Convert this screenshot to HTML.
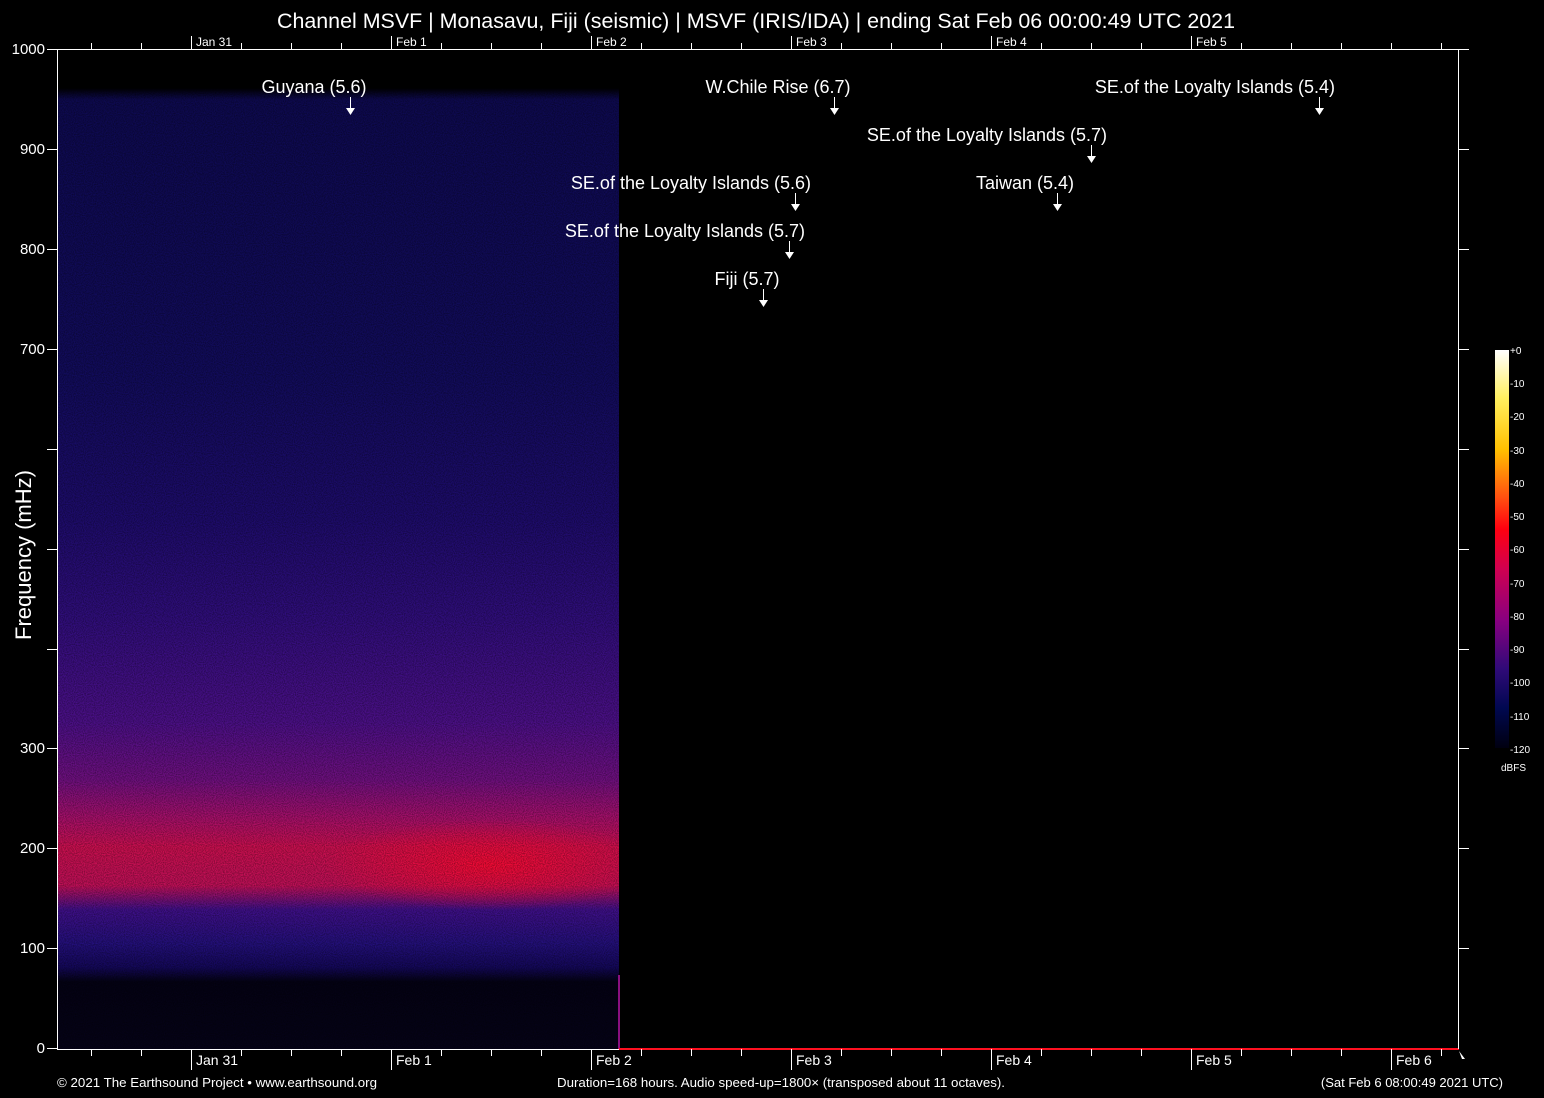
<!DOCTYPE html>
<html><head><meta charset="utf-8"><style>
html,body{margin:0;padding:0;background:#000;width:1544px;height:1098px;overflow:hidden}
svg{display:block}
text{font-family:"Liberation Sans",Arial,sans-serif;fill:#fff}
</style></head><body>
<svg width="1544" height="1098" viewBox="0 0 1544 1098" xmlns="http://www.w3.org/2000/svg">
<defs>
<linearGradient id="sv" x1="0" y1="0" x2="0" y2="1">
<stop offset="0" stop-color="#000000"/>
<stop offset="0.012" stop-color="#0e0a50"/>
<stop offset="0.3" stop-color="#120c5c"/>
<stop offset="0.45" stop-color="#1e0c6c"/>
<stop offset="0.55" stop-color="#300e7c"/>
<stop offset="0.66" stop-color="#4c1088"/>
<stop offset="0.72" stop-color="#701080"/>
<stop offset="0.76" stop-color="#a8106a"/>
<stop offset="0.79" stop-color="#cc1050"/>
<stop offset="0.83" stop-color="#c01058"/>
<stop offset="0.855" stop-color="#40108a"/>
<stop offset="0.89" stop-color="#24107c"/>
<stop offset="0.915" stop-color="#14085a"/>
<stop offset="0.93" stop-color="#040214"/>
<stop offset="1" stop-color="#060318"/>
</linearGradient>
<radialGradient id="blob" cx="490" cy="865" r="130" gradientUnits="userSpaceOnUse" gradientTransform="translate(490 865) scale(1.3 0.35) translate(-490 -865)">
<stop offset="0" stop-color="#ff0a30" stop-opacity="0.85"/>
<stop offset="1" stop-color="#ff0a30" stop-opacity="0"/>
</radialGradient>
<linearGradient id="cb" x1="0" y1="0" x2="0" y2="1">
<stop offset="0" stop-color="#ffffff"/>
<stop offset="0.12" stop-color="#fff060"/>
<stop offset="0.25" stop-color="#ffc000"/>
<stop offset="0.37" stop-color="#ff5010"/>
<stop offset="0.45" stop-color="#ff0010"/>
<stop offset="0.55" stop-color="#d00050"/>
<stop offset="0.68" stop-color="#880080"/>
<stop offset="0.8" stop-color="#300a78"/>
<stop offset="0.9" stop-color="#000850"/>
<stop offset="1" stop-color="#000010"/>
</linearGradient>
<filter id="noise"><feTurbulence type="fractalNoise" baseFrequency="0.9" numOctaves="1" seed="3"/><feColorMatrix values="0 0 0 0 0  0 0 0 0 0  0 0 0 0 0  0 0 0 -1.6 1.1"/></filter>
</defs>
<rect x="57" y="88" width="562" height="961" fill="url(#sv)"/>
<rect x="57" y="88" width="562" height="961" fill="url(#blob)"/>
<rect x="57" y="88" width="562" height="961" filter="url(#noise)" opacity="0.5"/>
<line x1="619" y1="975" x2="619" y2="1049" stroke="#8a1080" stroke-width="2"/>
<line x1="619" y1="1049" x2="1459" y2="1049" stroke="#ff1020" stroke-width="2"/>
<g stroke="#fff" stroke-width="1">
<line x1="57.5" y1="49" x2="57.5" y2="1049"/>
<line x1="1458.5" y1="49" x2="1458.5" y2="1049"/>
<line x1="57" y1="49.5" x2="1469" y2="49.5"/>
<line x1="57" y1="1049.5" x2="619" y2="1049.5"/>
<path d="M47 49.5H57M47 149.5H57M47 249.5H57M47 349.5H57M47 449.5H57M47 549.5H57M47 649.5H57M47 748.5H57M47 848.5H57M47 948.5H57M47 1048.5H57"/>
<path d="M1459 149.5H1469M1459 249.5H1469M1459 349.5H1469M1459 449.5H1469M1459 549.5H1469M1459 649.5H1469M1459 748.5H1469M1459 848.5H1469M1459 948.5H1469"/>
<path d="M91.5 1049V1056M141.5 1049V1056M191.5 1049V1070M241.5 1049V1056M291.5 1049V1056M341.5 1049V1056M391.5 1049V1070M441.5 1049V1056M491.5 1049V1056M541.5 1049V1056M591.5 1049V1070M641.5 1049V1056M691.5 1049V1056M741.5 1049V1056M791.5 1049V1070M841.5 1049V1056M891.5 1049V1056M941.5 1049V1056M991.5 1049V1070M1041.5 1049V1056M1091.5 1049V1056M1141.5 1049V1056M1191.5 1049V1070M1241.5 1049V1056M1291.5 1049V1056M1341.5 1049V1056M1391.5 1049V1070M1441.5 1049V1056"/>
<path d="M91.5 49V43M141.5 49V43M191.5 49V36M241.5 49V43M291.5 49V43M341.5 49V43M391.5 49V36M441.5 49V43M491.5 49V43M541.5 49V43M591.5 49V36M641.5 49V43M691.5 49V43M741.5 49V43M791.5 49V36M841.5 49V43M891.5 49V43M941.5 49V43M991.5 49V36M1041.5 49V43M1091.5 49V43M1141.5 49V43M1191.5 49V36M1241.5 49V43M1291.5 49V43M1341.5 49V43M1391.5 49V43M1441.5 49V43"/>
</g>
<text x="756" y="28" font-size="21" text-anchor="middle" textLength="958" lengthAdjust="spacingAndGlyphs">Channel MSVF | Monasavu, Fiji (seismic) | MSVF (IRIS/IDA) | ending Sat Feb 06 00:00:49 UTC 2021</text>
<g font-size="12">
<text x="196" y="46">Jan 31</text><text x="396" y="46">Feb  1</text><text x="596" y="46">Feb  2</text><text x="796" y="46">Feb  3</text><text x="996" y="46">Feb  4</text><text x="1196" y="46">Feb  5</text>
</g>
<g font-size="14">
<text x="196" y="1065">Jan 31</text><text x="396" y="1065">Feb  1</text><text x="596" y="1065">Feb  2</text><text x="796" y="1065">Feb  3</text><text x="996" y="1065">Feb  4</text><text x="1196" y="1065">Feb  5</text><text x="1396" y="1065">Feb  6</text>
</g>
<g font-size="15" text-anchor="end">
<text x="45" y="54">1000</text><text x="45" y="154">900</text><text x="45" y="254">800</text><text x="45" y="354">700</text><text x="45" y="753">300</text><text x="45" y="853">200</text><text x="45" y="953">100</text><text x="45" y="1053">0</text>
</g>
<text transform="translate(31 555) rotate(-90)" font-size="22" text-anchor="middle">Frequency (mHz)</text>
<g font-size="18" text-anchor="middle">
<text x="314" y="93">Guyana (5.6)</text>
<text x="778" y="93">W.Chile Rise (6.7)</text>
<text x="1215" y="93">SE.of the Loyalty Islands (5.4)</text>
<text x="987" y="141">SE.of the Loyalty Islands (5.7)</text>
<text x="691" y="189">SE.of the Loyalty Islands (5.6)</text>
<text x="1025" y="189">Taiwan (5.4)</text>
<text x="685" y="237">SE.of the Loyalty Islands (5.7)</text>
<text x="747" y="285">Fiji (5.7)</text>
</g>
<g stroke="#fff" stroke-width="1" fill="#fff">
<path d="M350.5 97V108"/><path d="M346 108h9l-4.5 7z" stroke="none"/>
<path d="M834.5 97V108"/><path d="M830 108h9l-4.5 7z" stroke="none"/>
<path d="M1319.5 97V108"/><path d="M1315 108h9l-4.5 7z" stroke="none"/>
<path d="M1091.5 145V156"/><path d="M1087 156h9l-4.5 7z" stroke="none"/>
<path d="M795.5 193V204"/><path d="M791 204h9l-4.5 7z" stroke="none"/>
<path d="M1057.5 193V204"/><path d="M1053 204h9l-4.5 7z" stroke="none"/>
<path d="M789.5 241V252"/><path d="M785 252h9l-4.5 7z" stroke="none"/>
<path d="M763.5 289V300"/><path d="M759 300h9l-4.5 7z" stroke="none"/>
<path d="M1459 1051l6 8-3 0z" stroke="none"/>
</g>
<rect x="1495" y="350" width="14" height="398" fill="url(#cb)"/>
<g font-size="10" fill="#ddd">
<text x="1510" y="354">+0</text><text x="1510" y="387">-10</text><text x="1510" y="420">-20</text><text x="1510" y="454">-30</text><text x="1510" y="487">-40</text><text x="1510" y="520">-50</text><text x="1510" y="553">-60</text><text x="1510" y="587">-70</text><text x="1510" y="620">-80</text><text x="1510" y="653">-90</text><text x="1510" y="686">-100</text><text x="1510" y="720">-110</text><text x="1510" y="753">-120</text>
<text x="1501" y="771">dBFS</text>
</g>
<g font-size="13">
<text x="57" y="1087" textLength="320" lengthAdjust="spacingAndGlyphs">© 2021 The Earthsound Project • www.earthsound.org</text>
<text x="557" y="1087" textLength="448" lengthAdjust="spacingAndGlyphs">Duration=168 hours. Audio speed-up=1800× (transposed about 11 octaves).</text>
<text x="1503" y="1087" text-anchor="end">(Sat Feb  6 08:00:49 2021 UTC)</text>
</g>
</svg>
</body></html>
